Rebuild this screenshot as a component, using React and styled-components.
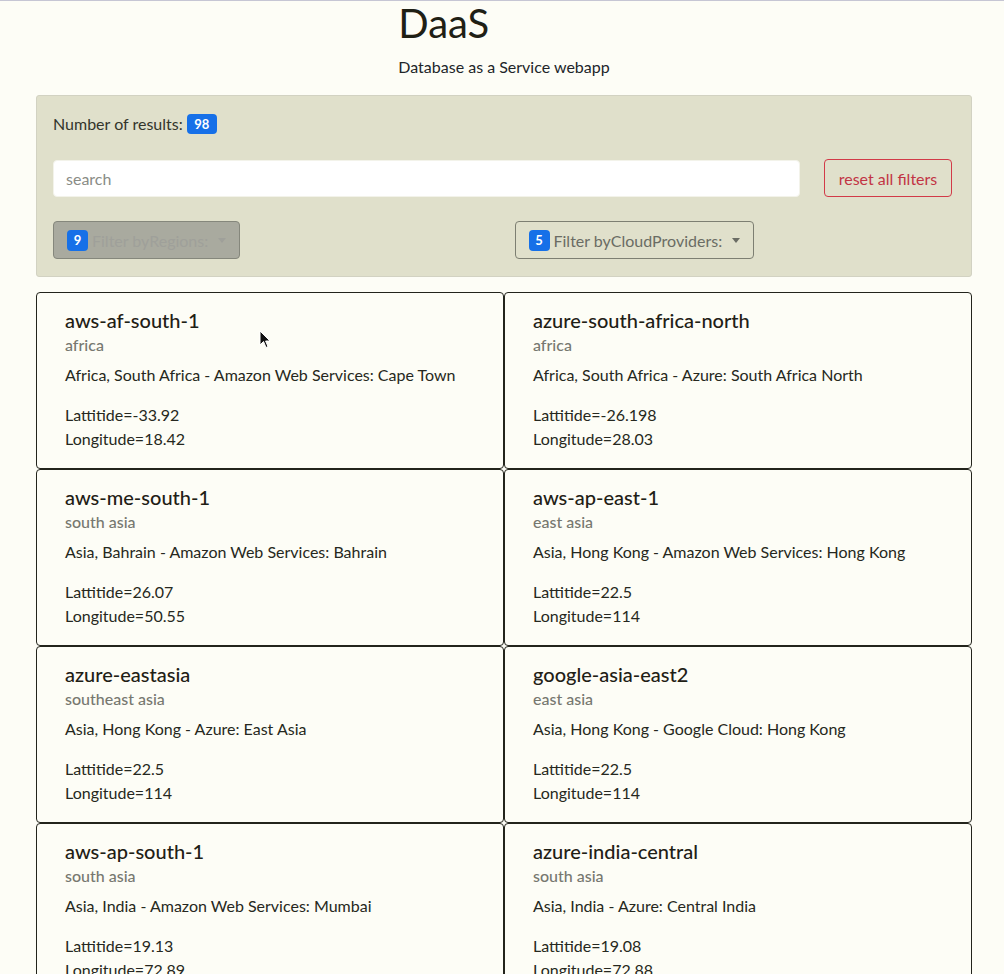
import React from "react";
import styled, { createGlobalStyle } from "styled-components";

const Global = createGlobalStyle`
  html { scrollbar-width: none; }
  html::-webkit-scrollbar { display: none; }
  body {
    margin: 0;
    background: #fdfdf6;
    font-family: Lato, "Open Sans", sans-serif;
    color: #212529;
    border-top: 1px solid #c6c6d4;
  }
`;

const Page = styled.div`
  width: 936px;
  margin: 0 0 0 36px;
  position: relative;
`;

const Header = styled.header`
  display: flex;
  justify-content: center;
`;

const HeaderInner = styled.div`
  display: flex;
  flex-direction: column;
  align-items: flex-start;
`;

const Title = styled.h1`
  margin: 0;
  font-size: 40px;
  font-weight: 400;
  line-height: 44px;
  color: #1f2015;
`;

const Subtitle = styled.p`
  margin: 10px 0 16px;
  font-size: 16px;
  line-height: 24px;
`;

const FilterPanel = styled.section`
  background: #e0e0cb;
  border: 1px solid #d2d2c2;
  border-radius: 3px;
  padding: 16px 19px 17px 16px;
  display: flex;
  flex-direction: column;
`;

const Results = styled.div`
  display: flex;
  align-items: center;
  gap: 4px;
  font-size: 16px;
  line-height: 24px;
  color: #33352b;
`;

const Badge = styled.span`
  display: inline-flex;
  align-items: center;
  justify-content: center;
  background: #1670e8;
  color: #fff;
  border-radius: 4px;
  font-size: 13px;
  font-weight: 700;
  min-width: ${(p) => p.$w || 21}px;
  height: ${(p) => p.$h || 21}px;
  padding: 0 6px;
  box-sizing: border-box;
`;

const SearchRow = styled.div`
  display: flex;
  gap: 24px;
  margin-top: 23px;
  align-items: center;
`;

const SearchInput = styled.input`
  flex: 1;
  height: 37px;
  box-sizing: border-box;
  border: 1px solid #f3f3ea;
  border-radius: 4px;
  background: #fff;
  padding: 0 12px;
  font-family: inherit;
  font-size: 16px;
  color: #212529;
  outline: none;
  &::placeholder { color: #8a8c86; }
`;

const ResetButton = styled.button`
  height: 38px;
  width: 128px;
  border: 1px solid #d23a48;
  border-radius: 4px;
  background: transparent;
  color: #c23444;
  font-family: inherit;
  font-size: 16px;
  padding: 0;
`;

const DropRow = styled.div`
  display: grid;
  grid-template-columns: 1fr 1fr;
  gap: 24px;
  margin-top: 24px;
`;

const DropButton = styled.button`
  justify-self: start;
  display: inline-flex;
  align-items: center;
  gap: 4px;
  height: 38px;
  box-sizing: border-box;
  padding: 0 13px;
  border-radius: 4px;
  font-family: inherit;
  font-size: 16px;
  border: 1px solid ${(p) => (p.$disabled ? "#85877c" : "#7d7f72")};
  background: ${(p) => (p.$disabled ? "#a9aa9f" : "transparent")};
  color: ${(p) => (p.$disabled ? "#9fa09a" : "#6a6c64")};
`;

const Caret = styled.span`
  display: inline-block;
  margin-left: 6px;
  width: 0;
  height: 0;
  border-left: 4px solid transparent;
  border-right: 4px solid transparent;
  border-top: 5px solid currentColor;
`;

const Grid = styled.div`
  display: grid;
  grid-template-columns: 1fr 1fr;
  margin-top: 15px;
`;

const Card = styled.article`
  border: 1px solid #23241c;
  border-radius: 4px;
  padding: 15px 28px 16px;
  min-height: 177px;
  box-sizing: border-box;
`;

const CardTitle = styled.h5`
  margin: 0;
  font-size: 20px;
  font-weight: 500;
  line-height: 24px;
  color: #1f2015;
`;

const CardSubtitle = styled.h6`
  margin: 1px 0 6px;
  font-size: 16px;
  font-weight: 500;
  line-height: 24px;
  color: #777870;
`;

const CardText = styled.p`
  margin: 0 0 16px;
  font-size: 16px;
  line-height: 24px;
  color: #262820;
`;

const Coord = styled.div`
  font-size: 16px;
  line-height: 24px;
  color: #262820;
`;

const Cursor = styled.svg`
  position: absolute;
  left: 223px;
  top: 329px;
  width: 12px;
  height: 19px;
`;

const regions = [
  ["aws-af-south-1", "africa", "Africa, South Africa - Amazon Web Services: Cape Town", "-33.92", "18.42"],
  ["azure-south-africa-north", "africa", "Africa, South Africa - Azure: South Africa North", "-26.198", "28.03"],
  ["aws-me-south-1", "south asia", "Asia, Bahrain - Amazon Web Services: Bahrain", "26.07", "50.55"],
  ["aws-ap-east-1", "east asia", "Asia, Hong Kong - Amazon Web Services: Hong Kong", "22.5", "114"],
  ["azure-eastasia", "southeast asia", "Asia, Hong Kong - Azure: East Asia", "22.5", "114"],
  ["google-asia-east2", "east asia", "Asia, Hong Kong - Google Cloud: Hong Kong", "22.5", "114"],
  ["aws-ap-south-1", "south asia", "Asia, India - Amazon Web Services: Mumbai", "19.13", "72.89"],
  ["azure-india-central", "south asia", "Asia, India - Azure: Central India", "19.08", "72.88"],
  ["azure-india-south", "south asia", "Asia, India - Azure: South India", "12.98", "80.16"],
  ["azure-india-west", "south asia", "Asia, India - Azure: West India", "19.08", "72.88"],
];

export default function App() {
  return (
    <>
      <Global />
      <Page>
        <Header>
          <HeaderInner>
            <Title>DaaS</Title>
            <Subtitle>Database as a Service webapp</Subtitle>
          </HeaderInner>
        </Header>
        <FilterPanel>
          <Results>
            Number of results: <Badge $w={30} $h={20}>98</Badge>
          </Results>
          <SearchRow>
            <SearchInput placeholder="search" />
            <ResetButton>reset all filters</ResetButton>
          </SearchRow>
          <DropRow>
            <DropButton $disabled>
              <Badge>9</Badge> Filter byRegions: <Caret />
            </DropButton>
            <DropButton>
              <Badge>5</Badge> Filter byCloudProviders: <Caret />
            </DropButton>
          </DropRow>
        </FilterPanel>
        <Grid>
          {regions.map(([name, area, desc, lat, lon]) => (
            <Card key={name}>
              <CardTitle>{name}</CardTitle>
              <CardSubtitle>{area}</CardSubtitle>
              <CardText>{desc}</CardText>
              <Coord>Lattitide={lat}</Coord>
              <Coord>Longitude={lon}</Coord>
            </Card>
          ))}
        </Grid>
        <Cursor viewBox="0 0 12 19">
          <path d="M1 1 L1 15 L4.5 11.5 L7 17.5 L9 16.6 L6.6 11 L11 11 Z" fill="#111" stroke="#fff" strokeWidth="1" />
        </Cursor>
      </Page>
    </>
  );
}
